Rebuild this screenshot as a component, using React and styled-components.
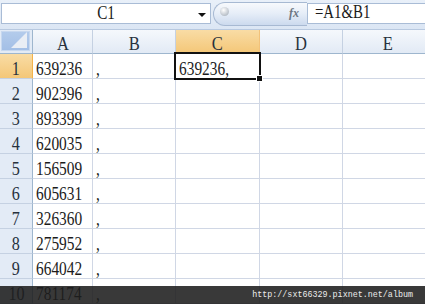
import React from "react";
import styled, { createGlobalStyle, css } from "styled-components";

const GlobalStyle = createGlobalStyle`
  html, body {
    margin: 0;
    padding: 0;
    background: #ffffff;
    overflow: hidden;
  }
`;

const serif = `"Liberation Serif", "Times New Roman", serif`;

const columns = [
  { key: "A", width: 60 },
  { key: "B", width: 83 },
  { key: "C", width: 84 },
  { key: "D", width: 83 },
  { key: "E", width: 90 },
];

const values = [
  "639236",
  "902396",
  "893399",
  "620035",
  "156509",
  "605631",
  "326360",
  "275952",
  "664042",
  "781174",
];

const selected = { col: "C", row: 1 };

const Page = styled.div`
  position: relative;
  width: 425px;
  height: 304px;
  overflow: hidden;
  font-family: ${serif};
  color: #1b1b1b;
`;

// narrow glyphs, like the MingLiU latin face of the screenshot
const Narrow = styled.span`
  display: inline-block;
  font-size: 19px;
  line-height: 1;
  transform: scaleX(${({ $scale }) => $scale || 0.8});
  transform-origin: ${({ $origin }) => $origin || "left"} bottom;
`;

const FormulaBar = styled.div`
  display: flex;
  align-items: stretch;
  height: 30px;
  padding: 3px 0 5px 1px;
  box-sizing: border-box;
  background: linear-gradient(#e9f0f9, #dbe6f4);
  border-bottom: 1px solid #b8c9e0;
`;

const NameBox = styled.div`
  position: relative;
  width: 210px;
  box-sizing: border-box;
  background: #fff;
  border: 1px solid #a9bcd6;
  display: flex;
  align-items: flex-end;
  justify-content: center;
  padding-bottom: 1px;
`;

const DropArrow = styled.span`
  position: absolute;
  right: 4px;
  top: 9px;
  width: 0;
  height: 0;
  border-left: 4px solid transparent;
  border-right: 4px solid transparent;
  border-top: 4px solid #111;
`;

const Pill = styled.div`
  display: flex;
  align-items: center;
  justify-content: space-between;
  width: 94px;
  margin: -1px 0 -2px 2px;
  padding: 0 8px 0 6px;
  box-sizing: border-box;
  border: 1px solid #a7b9d2;
  border-right: none;
  border-radius: 13px 0 0 13px;
  background: linear-gradient(#f7f9fc 0%, #e7eef8 45%, #ccdaee 100%);
`;

const Knob = styled.span`
  width: 9px;
  height: 9px;
  border-radius: 50%;
  margin-top: -5px;
  background: radial-gradient(circle at 40% 35%, #ffffff, #b9c0c9 70%, #98a1ad);
`;

const Fx = styled.span`
  font-family: ${serif};
  font-style: italic;
  font-weight: bold;
  font-size: 12px;
  color: #6d7682;
  margin-top: -2px;
`;

const FormulaInput = styled.div`
  flex: 1;
  background: #fff;
  border: 1px solid #a9bcd6;
  border-right: none;
  display: flex;
  align-items: flex-end;
  padding: 0 0 2px 7px;
`;

const Row = styled.div`
  display: grid;
  grid-template-columns: 33px ${columns.map((c) => `${c.width}px`).join(" ")};
  height: ${({ $header }) => ($header ? 24 : 25)}px;
`;

const Corner = styled.div`
  position: relative;
  box-sizing: border-box;
  background: #e3ebf6;
  border-right: 1px solid #9eb6ce;
  border-bottom: 1px solid #9eb6ce;
  padding: 1px 2px 2px 1px;
  &::before {
    content: "";
    display: block;
    width: 100%;
    height: 100%;
    background: linear-gradient(#b3cbeb, #a3bfe6);
    border: 1px solid #c7d8ef;
    box-sizing: border-box;
  }
  &::after {
    content: "";
    position: absolute;
    right: 5px;
    bottom: 5px;
    width: 0;
    height: 0;
    border-left: 16px solid transparent;
    border-bottom: 16px solid #e9eef5;
  }
`;

const ColHead = styled.div`
  box-sizing: border-box;
  display: flex;
  align-items: flex-end;
  justify-content: center;
  color: #27313d;
  padding-bottom: 0;
  border-right: 1px solid #c5d1e2;
  border-bottom: 1px solid #9eb6ce;
  background: linear-gradient(#f5f8fc, #e2eaf5);
  ${({ $active }) =>
    $active &&
    css`
      background: linear-gradient(#f9dca5, #f4c778);
      border-bottom-color: #f2b34c;
      border-right-color: #f2c27a;
    `}
`;

const RowHead = styled.div`
  box-sizing: border-box;
  display: flex;
  align-items: flex-end;
  justify-content: center;
  color: #27313d;
  background: #e3ebf6;
  border-right: 1px solid #9eb6ce;
  border-bottom: 1px solid #c5d1e2;
  ${({ $active }) =>
    $active &&
    css`
      background: linear-gradient(#f9dca5, #f4c778);
      border-right-color: #f2b34c;
    `}
`;

const Cell = styled.div`
  position: relative;
  box-sizing: border-box;
  display: flex;
  align-items: flex-end;
  padding: 0 0 0 3px;
  white-space: nowrap;
  border-right: 1px solid #d0d7e5;
  border-bottom: 1px solid #d0d7e5;
  ${({ $selected }) =>
    $selected &&
    css`
      &::after {
        content: "";
        position: absolute;
        left: -2px;
        top: -2px;
        right: -2px;
        bottom: -2px;
        border: 2px solid #111;
        z-index: 2;
      }
    `}
`;

const FillHandle = styled.span`
  position: absolute;
  right: -4px;
  bottom: -4px;
  width: 5px;
  height: 5px;
  background: #111;
  border: 1px solid #fff;
  z-index: 3;
`;

const Watermark = styled.div`
  position: absolute;
  left: 0;
  right: 0;
  bottom: 0;
  height: 18px;
  background: rgba(30, 30, 30, 0.88);
  display: flex;
  align-items: center;
  justify-content: flex-end;
  padding-right: 12px;
  font-family: "Liberation Mono", "Courier New", monospace;
  font-size: 8.4px;
  color: #ececec;
`;

function cellText(col, row) {
  if (col === "A") return values[row - 1];
  if (col === "B") return ",";
  if (col === "C" && row === 1) return `${values[0]},`;
  return "";
}

export default function App() {
  return (
    <Page>
      <GlobalStyle />
      <FormulaBar>
        <NameBox>
          <Narrow $origin="center">C1</Narrow>
          <DropArrow />
        </NameBox>
        <Pill>
          <Knob />
          <Fx>fx</Fx>
        </Pill>
        <FormulaInput>
          <Narrow $scale={0.78}>=A1&amp;B1</Narrow>
        </FormulaInput>
      </FormulaBar>
      <Row $header>
        <Corner />
        {columns.map((c) => (
          <ColHead key={c.key} $active={c.key === selected.col}>
            <Narrow $origin="center" $scale={0.87}>
              {c.key}
            </Narrow>
          </ColHead>
        ))}
      </Row>
      {values.map((_, i) => {
        const row = i + 1;
        return (
          <Row key={row}>
            <RowHead $active={row === selected.row}>
              <Narrow $origin="center" $scale={0.85}>
                {row}
              </Narrow>
            </RowHead>
            {columns.map((c) => {
              const isSel = c.key === selected.col && row === selected.row;
              return (
                <Cell key={c.key} $selected={isSel}>
                  <Narrow $scale={0.81}>{cellText(c.key, row)}</Narrow>
                  {isSel && <FillHandle />}
                </Cell>
              );
            })}
          </Row>
        );
      })}
      <Watermark>http://sxt66329.pixnet.net/album</Watermark>
    </Page>
  );
}
